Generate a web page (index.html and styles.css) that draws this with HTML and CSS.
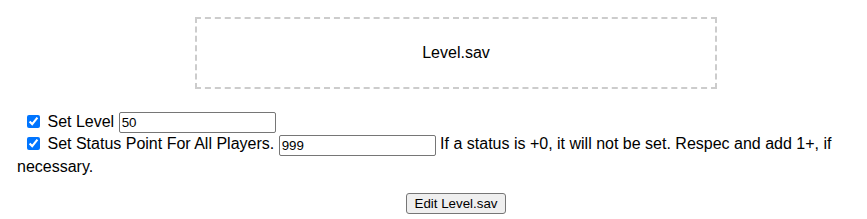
FILE: index.html
```html
<!DOCTYPE html>
<html lang="en">
<head>
    <meta charset="UTF-8">
    <title>Level.sav Editor</title>
    <link rel="stylesheet" href="styles.css">
</head>
<body>
    <div class="drop-zone" id="drop-zone">Level.sav</div>
    <div class="options">
        <input type="checkbox" id="set-level" checked> <label for="set-level">Set Level</label>
        <input type="text" id="level" class="num-input" value="50"><br>
        <input type="checkbox" id="set-status" checked> <label for="set-status">Set Status Point For All Players.</label>
        <input type="text" id="status" class="num-input" value="999">
        If a status is +0, it will not be set. Respec and add 1+, if necessary.
    </div>
    <div class="actions">
        <button id="edit">Edit Level.sav</button>
    </div>
</body>
</html>
```

FILE: styles.css
```css
body {
    margin: 0;
    font-family: "Liberation Sans", Arial, sans-serif;
    font-size: 16px;
    color: #000;
    background-color: #fff;
}
.drop-zone {
    width: 518px;
    height: 68px;
    margin: 17px 0 0 195px;
    border: 2px dashed #ccc;
    display: flex;
    align-items: center;
    justify-content: center;
}
.options {
    margin-top: 22px;
    padding: 0 8px 0 17px;
    line-height: 21px;
}
.options input[type="checkbox"] {
    margin: 0 3px 0 10px;
    width: 13px;
    height: 13px;
    vertical-align: -1px;
}
.num-input {
    box-sizing: border-box;
    width: 157px;
    height: 21px;
    padding: 1px 2px;
    border: 1px solid #767676;
    border-radius: 2px;
    font-family: "Liberation Sans", Arial, sans-serif;
    font-size: 13.33px;
    vertical-align: middle;
}
.actions {
    margin-top: 16px;
    padding-left: 45px;
    text-align: center;
}
.actions button {
    box-sizing: border-box;
    width: 100px;
    height: 21px;
    padding: 0;
    font-family: "Liberation Sans", Arial, sans-serif;
    font-size: 13.33px;
    background-color: #efefef;
    border: 1px solid #767676;
    border-radius: 3px;
}
```
